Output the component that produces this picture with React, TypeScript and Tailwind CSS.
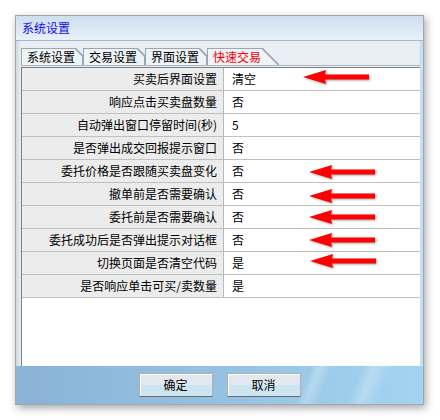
import React from "react";

const rows = [
  { label: "买卖后界面设置", value: "清空" },
  { label: "响应点击买卖盘数量", value: "否" },
  { label: "自动弹出窗口停留时间(秒)", value: "5" },
  { label: "是否弹出成交回报提示窗口", value: "否" },
  { label: "委托价格是否跟随买卖盘变化", value: "否" },
  { label: "撤单前是否需要确认", value: "否" },
  { label: "委托前是否需要确认", value: "否" },
  { label: "委托成功后是否弹出提示对话框", value: "否" },
  { label: "切换页面是否清空代码", value: "是" },
  { label: "是否响应单击可买/卖数量", value: "是" },
];

const tabs = [
  { name: "系统设置", active: false },
  { name: "交易设置", active: false },
  { name: "界面设置", active: false },
  { name: "快速交易", active: true },
];

// where the red marker arrows sit over the screenshot
const arrows = [
  { left: 303, top: 69 },
  { left: 309, top: 164 },
  { left: 309, top: 188 },
  { left: 309, top: 209 },
  { left: 309, top: 232 },
  { left: 310, top: 253 },
];

function Arrow({ left, top }: { left: number; top: number }) {
  return (
    <svg
      className="absolute drop-shadow-[1px_1px_1px_rgba(0,0,0,0.35)]"
      style={{ left, top }}
      width="66"
      height="16"
      viewBox="0 0 66 16"
    >
      <path d="M0 8 L23 1 L22 5.5 L66 5.5 L66 10.5 L22 10.5 L23 15 Z" fill="#ff0000" />
    </svg>
  );
}

function Tab({ name, active }: { name: string; active: boolean }) {
  const outer = active
    ? "w-[72px] [clip-path:polygon(0_0,calc(100%-16px)_0,100%_16px,100%_100%,0_100%)]"
    : "w-[62px] [clip-path:polygon(0_0,calc(100%-7px)_0,100%_7px,100%_100%,0_100%)]";
  const inner = active
    ? "[clip-path:polygon(0_0,calc(100%-16.4px)_0,100%_16.4px,100%_100%,0_100%)]"
    : "[clip-path:polygon(0_0,calc(100%-7.4px)_0,100%_7.4px,100%_100%,0_100%)]";
  return (
    <div className={`h-[17px] bg-[#9aa6b2] pl-[1px] pt-[1px] pr-[1px] ${outer}`}>
      <div
        className={`flex h-full items-center bg-[#eef3f6] pl-[5px] text-[12px] leading-none ${inner} ${
          active ? "text-[#ff0000]" : "text-black"
        }`}
      >
        {name}
      </div>
    </div>
  );
}

export default function App() {
  return (
    <div className="relative h-[420px] w-[440px] overflow-hidden bg-white pl-[15px] pt-[15px] font-['Noto_Sans_CJK_SC','Noto_Sans',sans-serif]">
      <div className="flex h-[390px] w-[409px] flex-col border border-[#9ea6ae] bg-[#e9eff4] shadow-[2px_3px_8px_rgba(0,0,0,0.35)]">
        <div className="flex h-[25px] items-center border-b border-[#aab6c2] bg-[linear-gradient(180deg,#cfdef1,#e9f0f8)] pl-[6px] text-[12px] leading-none text-[#0c0cf0]">
          系统设置
        </div>

        <div className="flex flex-1 flex-col bg-[linear-gradient(90deg,#cfd8e0_0px,#e9eff4_5px,#e9eff4_calc(100%-4px),#c4e0f2_calc(100%-3px))] pl-[5px] pr-[3px] pt-[7px]">
          <div className="flex h-[18px] items-end border-b border-[#a9b6c2]">
            {tabs.map((t) => (
              <Tab key={t.name} name={t.name} active={t.active} />
            ))}
          </div>
          <div className="mt-[1px] flex-1 border-l border-t border-[#7f7f7f] bg-white">
            {rows.map((r) => (
              <div key={r.label} className="flex h-[23px] border-b border-[#c0c0c0] text-[12px] leading-none text-black">
                <div className="flex w-[202px] items-center justify-end border-r border-[#b8b8b8] bg-[#ececec] pr-[6px]">
                  {r.label}
                </div>
                <div className="flex flex-1 items-center pl-[8px]">{r.value}</div>
              </div>
            ))}
          </div>
        </div>

        <div className="flex h-[38px] justify-center gap-[14px] bg-[linear-gradient(112deg,transparent_70%,rgba(255,255,255,0.28)_72%,transparent_75%,transparent_82%,rgba(255,255,255,0.25)_85%,transparent_89%),linear-gradient(90deg,#8ab3d6,#96c3e3_55%,#a4d4f1)] pt-[7px]">
          {["确定", "取消"].map((b) => (
            <button
              key={b}
              className="h-[24px] w-[74px] border border-[#b0b0b0] border-b-[#6a6a6a] bg-[linear-gradient(180deg,#e1e8f0_0%,#e1e8f0_50%,#cde5ee_50%,#cde5ee_100%)] text-[12px] leading-none text-black shadow-[inset_1px_1px_0_#ffffff]"
            >
              {b}
            </button>
          ))}
        </div>
      </div>

      {arrows.map((a, i) => (
        <Arrow key={i} left={a.left} top={a.top} />
      ))}
    </div>
  );
}
